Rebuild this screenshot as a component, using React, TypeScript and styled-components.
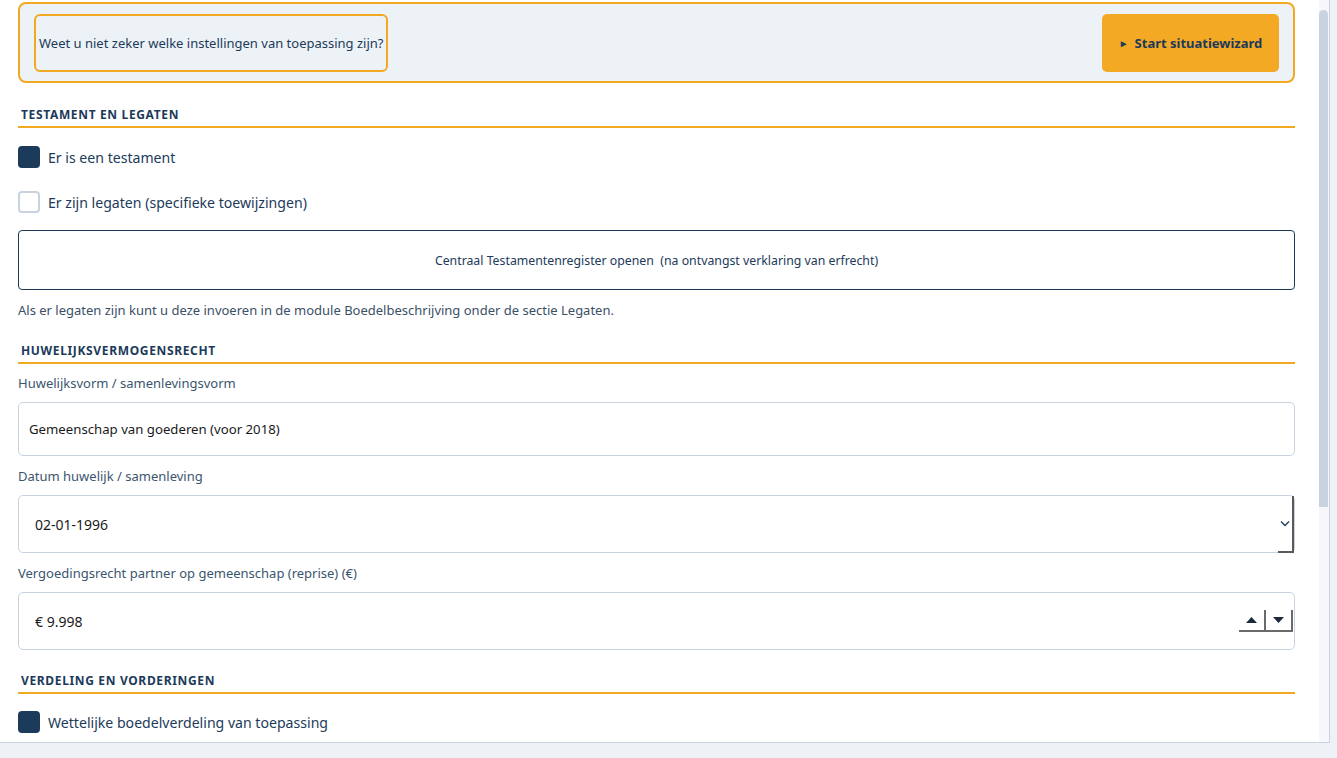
import React from 'react';
import styled, { createGlobalStyle } from 'styled-components';

const GlobalStyle = createGlobalStyle`
  html, body {
    margin: 0;
    padding: 0;
    background: #eef2f7;
  }
  body {
    font-family: "Noto Sans", "Open Sans", sans-serif;
    color: #1c3a5a;
  }
`;

const Page = styled.div`
  width: 1330px;
  height: 743px;
  box-sizing: border-box;
  background: #fff;
  border-bottom: 1px solid #c8d3df;
  display: flex;
  overflow: hidden;
`;

const Content = styled.div`
  flex: 1;
  min-width: 0;
  padding: 2px 24px 0 18px;
  display: flex;
  flex-direction: column;
`;

const ScrollTrack = styled.div`
  width: 10px;
  flex: none;
  background: #f5f7fa;
  border-right: 1px solid #c8d3df;
  padding-top: 10px;
`;

const ScrollThumb = styled.div`
  width: 9px;
  height: 497px;
  background: #c8d3df;
  border-radius: 5px 5px 0 0;
`;

const Wizard = styled.div`
  height: 81px;
  flex: none;
  box-sizing: border-box;
  border: 2px solid #f2a922;
  border-radius: 8px;
  background: #edf2f7;
  display: flex;
  align-items: center;
  justify-content: space-between;
  padding: 0 14px;
`;

const WizardHint = styled.div`
  height: 58px;
  box-sizing: border-box;
  border: 2px solid #f2a922;
  border-radius: 6px;
  display: flex;
  align-items: center;
  padding: 0 3px;
  font-size: 13px;
`;

const WizardButton = styled.div`
  width: 177px;
  height: 58px;
  margin-top: 1px;
  box-sizing: border-box;
  background: #f3a923;
  border-radius: 5px;
  display: flex;
  align-items: center;
  justify-content: center;
  gap: 6px;
  font-size: 13px;
  font-weight: 700;
  color: #1c3a5a;
`;

const Play = styled.span`
  font-size: 10px;
`;

const SectionTitle = styled.div<{ $top: number }>`
  margin-top: ${p => p.$top}px;
  padding: 0 0 3px 3px;
  border-bottom: 2px solid #f2a922;
  font-size: 12px;
  font-weight: 700;
  letter-spacing: 0.65px;
  text-transform: uppercase;
  color: #1c3a5a;
`;

const CheckRow = styled.div<{ $top: number }>`
  margin-top: ${p => p.$top}px;
  display: flex;
  align-items: center;
  gap: 8px;
  font-size: 14.1px;
  color: #1c3a5a;
`;

const Box = styled.span<{ $checked?: boolean }>`
  width: 22px;
  height: 22px;
  flex: none;
  box-sizing: border-box;
  border-radius: 4px;
  background: ${p => (p.$checked ? '#1c3a5a' : '#fff')};
  border: 2px solid ${p => (p.$checked ? '#1c3a5a' : '#c8d3df')};
`;

const RegisterButton = styled.div`
  margin-top: 17px;
  height: 60px;
  flex: none;
  box-sizing: border-box;
  border: 1px solid #1c3a5a;
  border-radius: 4px;
  display: flex;
  align-items: center;
  justify-content: center;
  font-size: 12.3px;
  color: #1c3a5a;
  white-space: pre;
`;

const Note = styled.div`
  margin-top: 11px;
  font-size: 13px;
  color: #3b4f66;
`;

const Label = styled.div<{ $top: number }>`
  margin-top: ${p => p.$top}px;
  font-size: 13px;
  color: #3b556f;
`;

const Field = styled.div<{ $pad: number; $h: number; $size: number }>`
  margin-top: 10px;
  height: ${p => p.$h}px;
  flex: none;
  box-sizing: border-box;
  border: 1px solid #c8d3df;
  border-radius: 5px;
  display: flex;
  align-items: center;
  justify-content: space-between;
  padding-left: ${p => p.$pad}px;
  font-size: ${p => p.$size}px;
  color: #1a1a1a;
`;

const DropArrow = styled.div`
  align-self: stretch;
  width: 14px;
  margin: 0 0 -1px 0;
  display: flex;
  align-items: center;
  justify-content: center;
  border-right: 2px solid #5a5a5a;
  border-bottom: 2px solid #5a5a5a;
`;

const Spinner = styled.div`
  display: flex;
  margin-right: 1px;
`;

const SpinButton = styled.div`
  width: 27px;
  height: 22px;
  box-sizing: border-box;
  display: flex;
  align-items: center;
  justify-content: center;
  border-right: 2px solid #6a6a6a;
  border-bottom: 2px solid #6a6a6a;
  background: #fff;
`;

const Chevron = () => (
  <svg width="10" height="7" viewBox="0 0 10 7">
    <path d="M1 1.5 L5 5.5 L9 1.5" fill="none" stroke="#1c3a5a" strokeWidth="1.3" />
  </svg>
);

const Tri = ({ up }: { up?: boolean }) => (
  <svg width="11" height="6" viewBox="0 0 11 6">
    <path d={up ? 'M0 6 L5.5 0 L11 6 Z' : 'M0 0 L11 0 L5.5 6 Z'} fill="#1c2a3a" />
  </svg>
);

export default function App() {
  return (
    <>
      <GlobalStyle />
      <Page>
        <Content>
          <Wizard>
            <WizardHint>Weet u niet zeker welke instellingen van toepassing zijn?</WizardHint>
            <WizardButton>
              <Play>►</Play>
              Start situatiewizard
            </WizardButton>
          </Wizard>

          <SectionTitle $top={23}>Testament en legaten</SectionTitle>
          <CheckRow $top={18}>
            <Box $checked />
            Er is een testament
          </CheckRow>
          <CheckRow $top={23}>
            <Box />
            Er zijn legaten (specifieke toewijzingen)
          </CheckRow>
          <RegisterButton>Centraal Testamentenregister openen  (na ontvangst verklaring van erfrecht)</RegisterButton>
          <Note>Als er legaten zijn kunt u deze invoeren in de module Boedelbeschrijving onder de sectie Legaten.</Note>

          <SectionTitle $top={23}>Huwelijksvermogensrecht</SectionTitle>
          <Label $top={10}>Huwelijksvorm / samenlevingsvorm</Label>
          <Field $pad={10} $h={54} $size={13.2}>Gemeenschap van goederen (voor 2018)</Field>
          <Label $top={11}>Datum huwelijk / samenleving</Label>
          <Field $pad={16} $h={58} $size={14}>
            02-01-1996
            <DropArrow>
              <Chevron />
            </DropArrow>
          </Field>
          <Label $top={11}>Vergoedingsrecht partner op gemeenschap (reprise) (€)</Label>
          <Field $pad={16} $h={58} $size={14}>
            € 9.998
            <Spinner>
              <SpinButton>
                <Tri up />
              </SpinButton>
              <SpinButton>
                <Tri />
              </SpinButton>
            </Spinner>
          </Field>

          <SectionTitle $top={22}>Verdeling en vorderingen</SectionTitle>
          <CheckRow $top={17}>
            <Box $checked />
            Wettelijke boedelverdeling van toepassing
          </CheckRow>
        </Content>
        <ScrollTrack>
          <ScrollThumb />
        </ScrollTrack>
      </Page>
    </>
  );
}
